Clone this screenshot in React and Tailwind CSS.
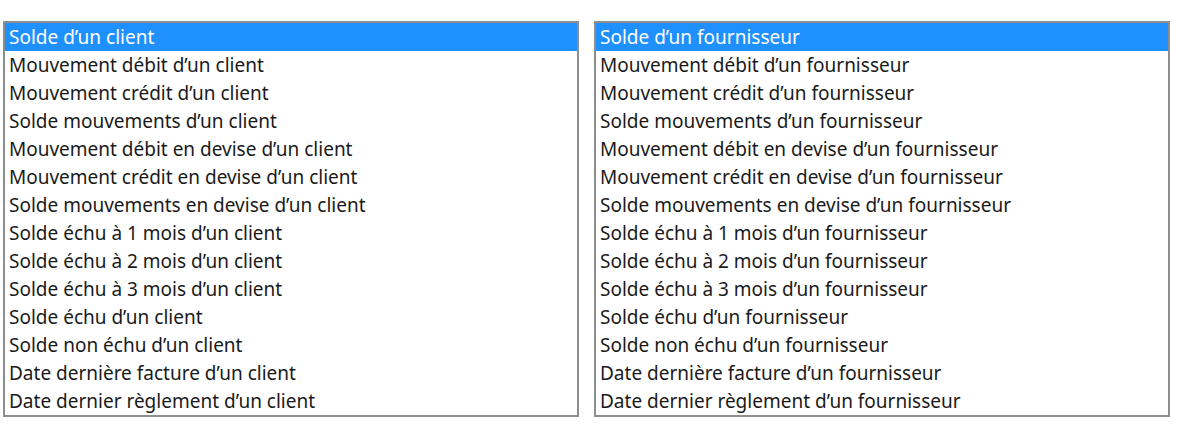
import React from "react";

const clients = [
  "Solde d’un client",
  "Mouvement débit d’un client",
  "Mouvement crédit d’un client",
  "Solde mouvements d’un client",
  "Mouvement débit en devise d’un client",
  "Mouvement crédit en devise d’un client",
  "Solde mouvements en devise d’un client",
  "Solde échu à 1 mois d’un client",
  "Solde échu à 2 mois d’un client",
  "Solde échu à 3 mois d’un client",
  "Solde échu d’un client",
  "Solde non échu d’un client",
  "Date dernière facture d’un client",
  "Date dernier règlement d’un client",
];

const fournisseurs = clients.map((s) => s.replace("client", "fournisseur"));

function ListBox({ items }) {
  return (
    <div className="w-[576px] border-2 border-[#8e8e8e] bg-white">
      {items.map((t, i) => (
        <div
          key={i}
          className={
            i === 0
              ? "h-[28px] pl-[4px] flex items-center bg-[#1e90ff] text-white whitespace-nowrap"
              : "h-[28px] pl-[4px] flex items-center text-[#1a1a1a] whitespace-nowrap"
          }
        >
          {t}
        </div>
      ))}
    </div>
  );
}

export default function App() {
  return (
    <div
      className="w-[1198px] h-[431px] bg-white pt-[21px] pl-[3px] flex items-start gap-[15px] text-[19px]"
      style={{ fontFamily: "'Noto Sans', sans-serif" }}
    >
      <ListBox items={clients} />
      <ListBox items={fournisseurs} />
    </div>
  );
}
